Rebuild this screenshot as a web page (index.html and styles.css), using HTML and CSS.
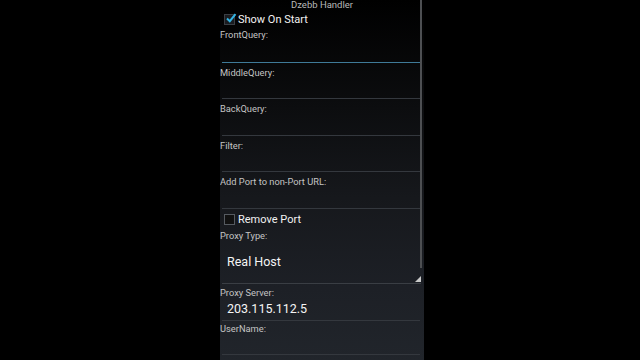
FILE: index.html
```html
<!DOCTYPE html>
<html lang="en">
<head>
    <meta charset="UTF-8">
    <meta name="viewport" content="width=device-width, initial-scale=1.0">
    <title>Dzebb Handler</title>
    <link rel="stylesheet" href="styles.css">
</head>
<body>

    <div id="screen">
        <div class="title">Dzebb Handler</div>

        <!-- Show on start -->
        <label class="check-row first">
            <span class="box checked">
                <svg viewBox="0 0 12 12" width="12" height="12"><path d="M2 6.5 L4.8 9.2 L10.5 2.2" fill="none" stroke="#33b5e5" stroke-width="2"/></svg>
            </span>
            Show On Start
        </label>

        <div class="field first-field">
            <div class="field-label">FrontQuery:</div>
            <div class="input focused"></div>
        </div>
        <div class="field">
            <div class="field-label">MiddleQuery:</div>
            <div class="input"></div>
        </div>
        <div class="field">
            <div class="field-label">BackQuery:</div>
            <div class="input"></div>
        </div>
        <div class="field">
            <div class="field-label">Filter:</div>
            <div class="input"></div>
        </div>
        <div class="field">
            <div class="field-label">Add Port to non-Port URL:</div>
            <div class="input"></div>
        </div>

        <!-- Remove port -->
        <label class="check-row second">
            <span class="box"></span>
            Remove Port
        </label>

        <div class="field tight">
            <div class="field-label">Proxy Type:</div>
            <div class="spinner">
                <span class="value">Real Host</span>
                <span class="corner"></span>
            </div>
        </div>
        <div class="field mid">
            <div class="field-label">Proxy Server:</div>
            <div class="input value-input"><span class="value">203.115.112.5</span></div>
        </div>
        <div class="field tight">
            <div class="field-label">UserName:</div>
            <div class="input"></div>
        </div>

        <div class="scrollbar"></div>
    </div>

</body>
</html>
```

FILE: styles.css
```css
body {
    margin: 0;
    padding: 0;
    background: #000;
    font-family: Roboto, "Noto Sans", sans-serif;
    overflow: hidden;
}
#screen {
    position: relative;
    margin-left: 220px;
    width: 204px;
    height: 360px;
    background: linear-gradient(180deg, #000 0%, #0c0d0f 30%, #16181c 55%, #1d2026 80%, #21252b 100%);
    overflow: hidden;
}
.title {
    height: 10px;
    line-height: 10px;
    font-size: 9.5px;
    color: #b9b9b9;
    text-align: center;
}
.check-row {
    display: flex;
    align-items: center;
    gap: 3px;
    font-size: 11px;
    color: #f2f2f2;
    padding-left: 4px;
}
.check-row.first { height: 15px; padding-top: 2px; }
.check-row.second { height: 17px; padding-top: 2px; }
.box {
    width: 9px;
    height: 9px;
    border: 1px solid #555a60;
    background: #111;
    position: relative;
}
.box.checked { border-color: #3a3f45; background: #1a1c20; }
.box svg { position: absolute; left: 0; top: -3px; }

.field { padding-top: 4px; }
.field.first-field { padding-top: 1.5px; }
.field.tight { padding-top: 2px; }
.field.mid { padding-top: 2.5px; }
.field-label {
    font-size: 9.3px;
    line-height: 11px;
    height: 11px;
    color: #c4c4c4;
}
.input {
    height: 20.5px;
    margin: 0 4px 0 2px;
    border-bottom: 1px solid #34383e;
    position: relative;
}
.first-field .input { height: 22px; }
.input.focused { border-bottom: 1.5px solid #3f7a98; }
.value {
    font-size: 12.5px;
    color: #f4f4f4;
    padding-left: 5px;
}
.value-input {
    height: 22px;
    display: flex;
    align-items: center;
}
.spinner {
    position: relative;
    height: 42.5px;
    margin: 0 3px 0 2px;
    border-bottom: 1px solid #3a3e44;
    display: flex;
    align-items: center;
}
.corner {
    position: absolute;
    right: 0;
    bottom: 1px;
    width: 0;
    height: 0;
    border-left: 6px solid transparent;
    border-bottom: 6px solid #c9c9c9;
}
.scrollbar {
    position: absolute;
    right: 2px;
    top: 0;
    width: 2px;
    height: 268px;
    background: #4d4f52;
}
```
